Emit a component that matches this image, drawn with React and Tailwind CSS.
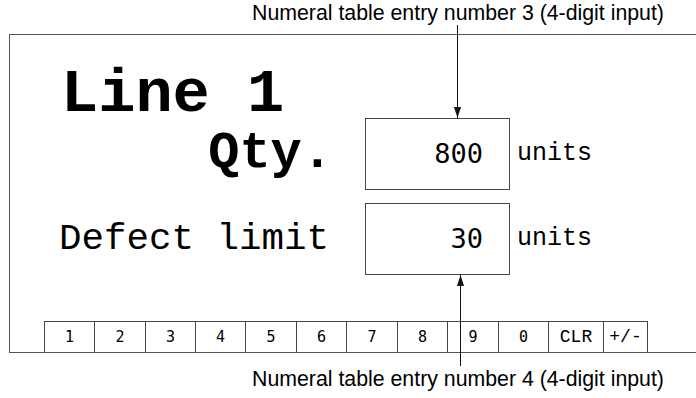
const keys = [
  { label: '1', w: 'w-[50px]' },
  { label: '2', w: 'w-[51px]' },
  { label: '3', w: 'w-[50px]' },
  { label: '4', w: 'w-[50px]' },
  { label: '5', w: 'w-[51px]' },
  { label: '6', w: 'w-[50px]' },
  { label: '7', w: 'w-[51px]' },
  { label: '8', w: 'w-[50px]' },
  { label: '9', w: 'w-[51px]' },
  { label: '0', w: 'w-[50px]' },
];

const mono = "font-['Courier_New','Nimbus_Mono_PS','FreeMono',Courier,'Liberation_Mono',monospace]";
const digits = "font-['DejaVu_Sans_Mono',monospace]";

const Arrow = ({ x, y1, y2 }) => {
  // arrowhead sits at y2
  const dir = y2 > y1 ? -1 : 1;
  return (
    <g>
      <line x1={x} y1={y1} x2={x} y2={y2 + dir * -1} stroke="#111" strokeWidth="1" />
      <polygon
        points={`${x},${y2} ${x - 3.5},${y2 + dir * 11} ${x + 3.5},${y2 + dir * 11}`}
        fill="#111"
      />
    </g>
  );
};

const ValueRow = ({ label, labelClass, value }) => (
  <div className="flex items-center">
    <div className={`w-[355px] text-right text-black ${mono} ${labelClass}`}>{label}</div>
    <div
      className={`w-[145px] h-[72px] border border-[#444] flex items-center justify-end pr-[26px] text-[27px] text-black ${digits}`}
    >
      {value}
    </div>
    <div className={`pl-[7px] text-[25px] text-black ${mono}`}>units</div>
  </div>
);

export default function App() {
  return (
    <div className="relative w-[696px] h-[398px] bg-white overflow-hidden">
      {/* top annotation */}
      <div className="h-[34px] pl-[220px] pt-[2px] text-center text-[21.3px] leading-[22px] text-black font-['Liberation_Sans',Arial,sans-serif]">
        Numeral table entry number 3 (4-digit input)
      </div>

      {/* panel */}
      <div className="ml-[9px] h-[319px] border-l border-t border-b border-[#555] flex flex-col">
        <div className={`pl-[51px] pt-[35px] text-[62px] leading-[50px] font-bold text-black ${mono}`}>
          Line 1
        </div>
        <div className="-mt-[2px]">
          <ValueRow
            label="Qty."
            labelClass="pr-[32px] text-[52px] leading-[52px] font-bold"
            value="800"
          />
        </div>
        <div className="mt-[13px]">
          <ValueRow
            label="Defect limit"
            labelClass="pr-[36px] text-[37.5px] leading-[40px] font-normal"
            value="30"
          />
        </div>

        {/* key row */}
        <div className="mt-auto ml-[34px] flex">
          {keys.map(k => (
            <div
              key={k.label}
              className={`${k.w} h-[31px] border-l border-t border-[#444] flex items-center justify-center text-[15px] text-black ${digits}`}
            >
              {k.label}
            </div>
          ))}
          <div
            className={`w-[55px] h-[31px] border-l border-t border-[#444] flex items-center justify-center text-[18px] text-black ${mono}`}
          >
            CLR
          </div>
          <div
            className={`w-[45px] h-[31px] border-l border-r border-t border-[#444] flex items-center justify-center text-[18px] text-black ${mono}`}
          >
            +/-
          </div>
        </div>
      </div>

      {/* bottom annotation */}
      <div className="pl-[220px] pt-[15px] text-center text-[21.3px] leading-[22px] text-black font-['Liberation_Sans',Arial,sans-serif]">
        Numeral table entry number 4 (4-digit input)
      </div>

      {/* arrows */}
      <svg className="absolute inset-0 pointer-events-none" width="696" height="398">
        <Arrow x={457.5} y1={25} y2={118} />
        <Arrow x={460.5} y1={366} y2={275} />
      </svg>
    </div>
  );
}
